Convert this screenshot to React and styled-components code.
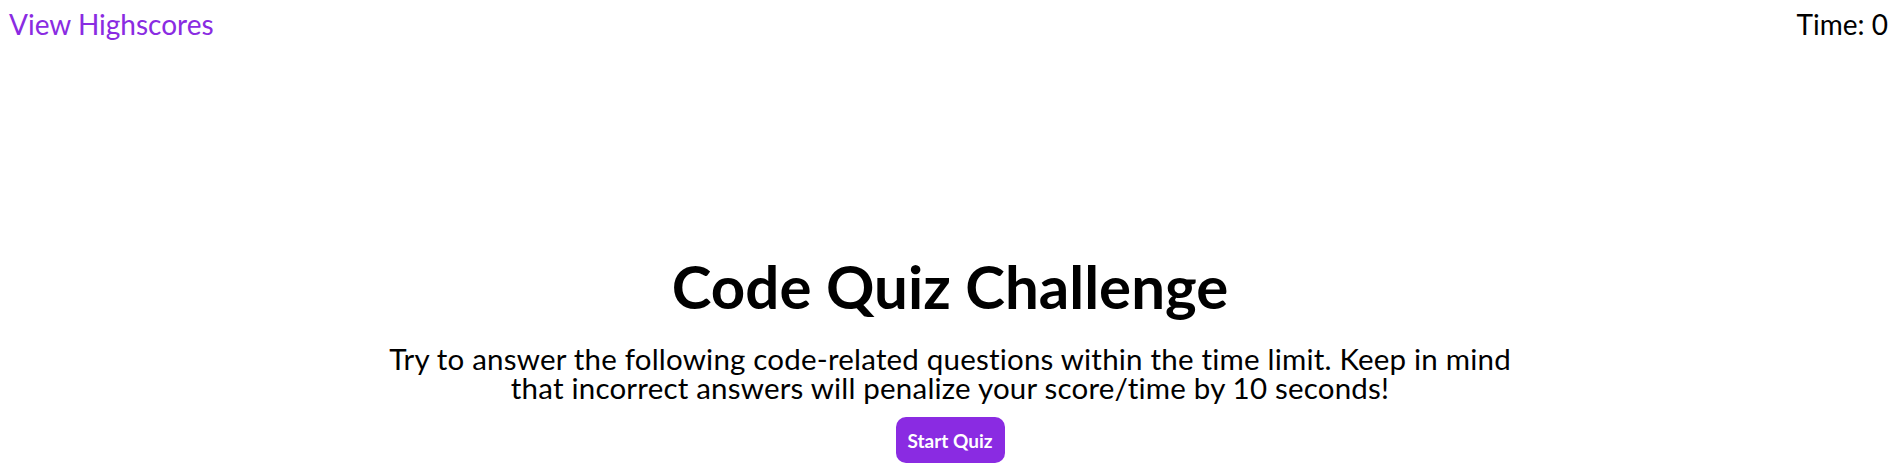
import React from 'react'
import styled, { createGlobalStyle } from 'styled-components'

const GlobalStyle = createGlobalStyle`
  body {
    margin: 0;
    background: #ffffff;
    font-family: Lato, "Open Sans", sans-serif;
    color: #000000;
  }
`

const Header = styled.header`
  display: flex;
  justify-content: space-between;
  align-items: center;
  padding: 6px 12px 0 9px;
  font-size: 28px;
  line-height: 36px;
`

const HighscoreLink = styled.a`
  color: #8a2be2;
  text-decoration: none;
  cursor: pointer;
`

const Timer = styled.div`
  color: #000000;
`

const Main = styled.main`
  display: flex;
  flex-direction: column;
  align-items: center;
  margin-top: 209px;
`

const Title = styled.h1`
  margin: 0;
  font-size: 60px;
  line-height: 70px;
  font-weight: 700;
`

const Intro = styled.p`
  margin: 23px 0 0;
  max-width: 1140px;
  text-align: center;
  font-size: 29.5px;
  letter-spacing: 0.2px;
  line-height: 29px;
`

const StartButton = styled.button`
  margin-top: 15px;
  padding: 0 12px;
  height: 46px;
  border: none;
  border-radius: 10px;
  background: #8a2be2;
  color: #ffffff;
  font-family: inherit;
  font-size: 19px;
  font-weight: 700;
  cursor: pointer;
`

export default function App() {
  return (
    <>
      <GlobalStyle />
      <Header>
        <HighscoreLink>View Highscores</HighscoreLink>
        <Timer>Time: 0</Timer>
      </Header>
      <Main>
        <Title>Code Quiz Challenge</Title>
        <Intro>
          Try to answer the following code-related questions within the time limit. Keep in mind
          that incorrect answers will penalize your score/time by 10 seconds!
        </Intro>
        <StartButton>Start Quiz</StartButton>
      </Main>
    </>
  )
}
